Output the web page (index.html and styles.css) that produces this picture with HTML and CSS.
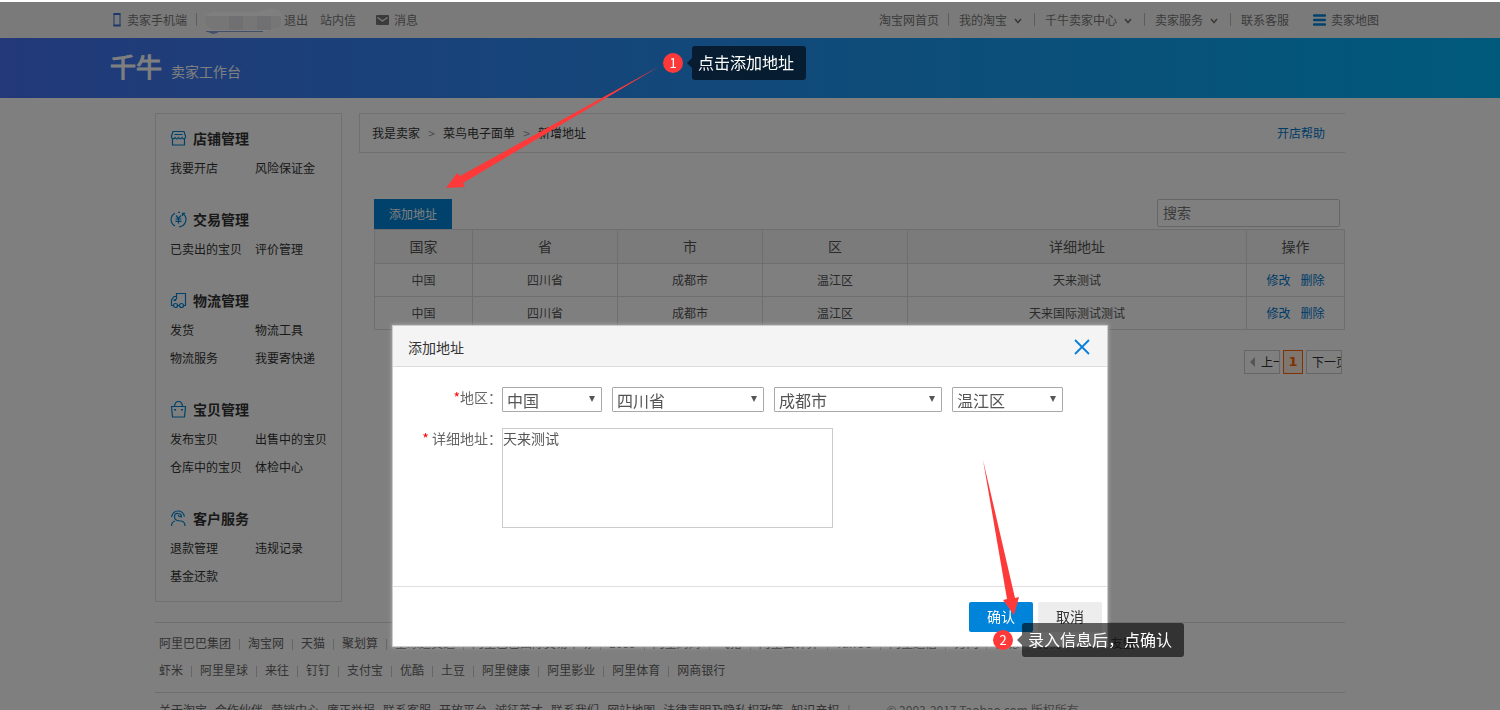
FILE: index.html
```html
<!DOCTYPE html>
<html lang="zh-CN">
<head>
<meta charset="utf-8">
<title>千牛卖家工作台</title>
<link rel="stylesheet" href="styles.css">
</head>
<body>
<div class="topbar">
  <div class="topbar-inner">
    <nav class="top-left">
      <svg class="icon-phone" viewBox="0 0 8 14"><path d="M1 1v12M7 1v12" stroke="#3b6fd0" stroke-width="1"/><path d="M0.500 1h7M0.500 12.500h7" stroke="#3b6fd0" stroke-width="2"/></svg>
      <a href="#">卖家手机端</a>
      <span class="sep"></span>
      <svg class="user-mask" viewBox="0 0 80 26"><path d="M3 8Q5 4 12 4H54Q60 3 64 1Q76-1 79 7Q81 15 76 20Q70 23 60 23H8Q0 20 3 8Z" fill="#fff"/><path d="M3 8H78Q80 15 76 20Q70 22 60 22H8Q0 18 3 8Z" fill="#ececee"/><path d="M26 8H40V22H26ZM54 8H68V22H54Z" fill="#e0e1e5"/><path d="M3 23.500H60" stroke="#879ddb"/><path d="M4 23H17Q14 26 10 26Q6 25 4 23Z" fill="#879ddb"/></svg>
      <a href="#">退出</a>
      <a href="#" class="inbox">站内信</a>
      <svg class="icon-mail" viewBox="0 0 13 10"><rect width="13" height="10" rx="1" fill="#777"/><path d="M1.500 2.500L6.500 6L11.500 2.500" fill="none" stroke="#f5f5f5" stroke-width="1.2"/></svg>
      <a href="#">消息</a>
    </nav>
    <nav class="top-right">
      <a href="#">淘宝网首页</a>
      <span class="sep"></span>
      <a href="#">我的淘宝<svg class="chev" viewBox="0 0 8 6"><path d="M1 1l3 3.500L7 1" /></svg></a>
      <span class="sep"></span>
      <a href="#">千牛卖家中心<svg class="chev" viewBox="0 0 8 6"><path d="M1 1l3 3.500L7 1" /></svg></a>
      <span class="sep"></span>
      <a href="#">卖家服务<svg class="chev" viewBox="0 0 8 6"><path d="M1 1l3 3.500L7 1" /></svg></a>
      <span class="sep"></span>
      <a href="#">联系客服</a>
      <a href="#" class="map-link"><svg class="icon-map" viewBox="0 0 13 12"><path d="M1 1.500h11M1 6h11M1 10.500h11" stroke="#0084d6" stroke-width="2.400" stroke-linecap="round"/></svg>卖家地图</a>
    </nav>
  </div>
</div>

<header class="header">
  <div class="header-inner">
    <span class="logo">千牛</span>
    <span class="logo-sub">卖家工作台</span>
  </div>
</header>

<div class="page">
  <div class="columns">
    <aside class="sidebar">
      <section class="group">
        <h3><svg viewBox="0 0 17 17"><path d="M3 1.500h11l1.500 4.500v1.500q-1.700 2.600-3.500 0q-1.700 2.600-3.500 0q-1.700 2.600-3.500 0q-1.800 2.600-3.500 0V6zM2.500 9v6h12V9M4.500 4.500h8"/></svg>店铺管理</h3>
        <div class="links"><a href="#">我要开店</a><a href="#">风险保证金</a></div>
      </section>
      <section class="group">
        <h3><svg viewBox="0 0 17 17"><path d="M5 2.200A7.200 7.200 0 0 0 5 15M8 1.300h2M12.500 2.500A7.200 7.200 0 0 1 9 15.800M12.500 5V2.300h2.600M6 4.500l2.500 3l2.500-3M8.500 7.500v5M5.500 8h6M5.500 10.300h6"/></svg>交易管理</h3>
        <div class="links"><a href="#">已卖出的宝贝</a><a href="#">评价管理</a></div>
      </section>
      <section class="group">
        <h3><svg viewBox="0 0 17 17"><path d="M3 13.500H1.500V8L4 4.500h2.500V1.500h9v12h-1.500M6.500 4.500V7L3.500 8.500h2.500M7.500 13.500h2"/><circle cx="5.500" cy="13.500" r="2"/><circle cx="11.500" cy="13.500" r="2"/></svg>物流管理</h3>
        <div class="links"><a href="#">发货</a><a href="#">物流工具</a><a href="#">物流服务</a><a href="#">我要寄快递</a></div>
      </section>
      <section class="group">
        <h3><svg viewBox="0 0 17 17"><path d="M1.500 5.500h14l-1 10.500h-12zM4.500 5.500q.5-5 4-5t4 5"/><path d="M5 8v1.500M12 8v1.500" stroke-width="2"/></svg>宝贝管理</h3>
        <div class="links"><a href="#">发布宝贝</a><a href="#">出售中的宝贝</a><a href="#">仓库中的宝贝</a><a href="#">体检中心</a></div>
      </section>
      <section class="group">
        <h3><svg viewBox="0 0 17 17"><path d="M1.500 7Q3 1 8 1t6.500 5.500M5 11Q1.500 12 1.500 16M11 11q4 .5 4 5M11 11Q4.500 11 4.500 7T8 3.500q3.500 0 3.500 3.500q-2.500 0-3.500-2"/></svg>客户服务</h3>
        <div class="links"><a href="#">退款管理</a><a href="#">违规记录</a><a href="#">基金还款</a></div>
      </section>
    </aside>

    <main class="main">
      <div class="crumbs">
        <a href="#">我是卖家</a><i>&gt;</i><a href="#">菜鸟电子面单</a><i>&gt;</i><span>新增地址</span>
        <a href="#" class="help">开店帮助</a>
      </div>
      <div class="panel">
        <div class="tools">
          <button type="button" class="add">添加地址</button>
          <input class="search" type="text" placeholder="搜索" aria-label="搜索">
        </div>
        <table class="list">
          <colgroup><col class="c-s"><col class="c-m"><col class="c-m"><col class="c-m"><col class="c-l"><col class="c-s"></colgroup>
          <thead><tr><th>国家</th><th>省</th><th>市</th><th>区</th><th>详细地址</th><th>操作</th></tr></thead>
          <tbody>
            <tr><td>中国</td><td>四川省</td><td>成都市</td><td>温江区</td><td>天来测试</td><td><a href="#">修改</a><a href="#">删除</a></td></tr>
            <tr><td>中国</td><td>四川省</td><td>成都市</td><td>温江区</td><td>天来国际测试测试</td><td><a href="#">修改</a><a href="#">删除</a></td></tr>
          </tbody>
        </table>
        <div class="pager">
          <a href="#" class="prev"><span class="tri"></span>上一页</a>
          <a href="#" class="current">1</a>
          <a href="#" class="next">下一页</a>
        </div>
      </div>
    </main>
  </div>

  <footer class="footer">
    <div class="sites">
      <div class="row"><a href="#">阿里巴巴集团</a><a href="#">淘宝网</a><a href="#">天猫</a><a href="#">聚划算</a><a href="#">全球速卖通</a><a href="#">阿里巴巴国际交易市场</a><a href="#">1688</a><a href="#">阿里妈妈</a><a href="#">飞猪</a><a href="#">阿里云计算</a><a href="#">YunOS</a><a href="#">阿里通信</a><a href="#">万网</a><a href="#">高德</a><a href="#">优视</a><a href="#">UC</a><a href="#">友盟</a></div>
      <div class="row"><a href="#">虾米</a><a href="#">阿里星球</a><a href="#">来往</a><a href="#">钉钉</a><a href="#">支付宝</a><a href="#">优酷</a><a href="#">土豆</a><a href="#">阿里健康</a><a href="#">阿里影业</a><a href="#">阿里体育</a><a href="#">网商银行</a></div>
    </div>
    <div class="about">
      <a href="#">关于淘宝</a><a href="#">合作伙伴</a><a href="#">营销中心</a><a href="#">廉正举报</a><a href="#">联系客服</a><a href="#">开放平台</a><a href="#">诚征英才</a><a href="#">联系我们</a><a href="#">网站地图</a><a href="#">法律声明及隐私权政策</a><a href="#">知识产权</a><span class="bar">|</span><span class="copy">© 2003-2017 Taobao.com 版权所有</span>
    </div>
  </footer>
</div>

<div class="overlay">
  <form class="dialog" role="dialog" aria-labelledby="dlg-title">
    <div class="dialog-head">
      <h2 id="dlg-title">添加地址</h2>
      <button type="button" class="close" aria-label="关闭"><svg viewBox="0 0 16 16"><path d="M1 1l14 14M15 1L1 15" stroke="#0a7fd9" stroke-width="1.800"/></svg></button>
    </div>
    <div class="dialog-body">
      <div class="field">
        <label for="country"><b>*</b>地区：</label>
        <div class="selects">
          <span class="sel s1"><select id="country"><option>中国</option></select></span>
          <span class="sel s2"><select aria-label="省"><option>四川省</option></select></span>
          <span class="sel s3"><select aria-label="市"><option>成都市</option></select></span>
          <span class="sel s4"><select aria-label="区"><option>温江区</option></select></span>
        </div>
      </div>
      <div class="field">
        <label for="detail"><b>*</b> 详细地址：</label>
        <textarea id="detail">天来测试</textarea>
      </div>
    </div>
    <div class="dialog-foot">
      <button type="button" class="ok">确认</button>
      <button type="button" class="cancel">取消</button>
    </div>
  </form>
</div>

<div class="notes">
  <svg class="arrows" viewBox="0 0 1500 710" width="1500" height="710">
    <path d="M660 66L460 176L457 173L446 188L465 187L463 183Z" fill="#fd3a39"/>
    <path d="M983 460L1007 599L1003 600L1014 615L1019 597L1015 598Z" fill="#fd3a39"/>
  </svg>
  <div class="note note-1"><span class="num">1</span><span class="tip">点击添加地址</span></div>
  <div class="note note-2"><span class="num">2</span><span class="tip">录入信息后，点确认</span></div>
</div>
</body>
</html>
```
FILE: styles.css
```css
* { box-sizing: border-box; }
html, body { height: 100%; overflow: hidden; }
body {
  margin: 0;
  padding-top: 2px;
  background: #fff;
  color: #333;
  font: 12px/20px "Noto Sans CJK SC", sans-serif;
}
a { color: inherit; text-decoration: none; }
button, input, select, textarea { font-family: inherit; margin: 0; }
svg { display: block; flex: none; }

/* top navigation */
.topbar { background: #f5f5f5; color: #777; }
.topbar-inner {
  max-width: 1280px; height: 36px; margin: 0 auto; padding: 0 11px 0 3px;
  display: flex; align-items: center; justify-content: space-between;
}
.top-left, .top-right { display: flex; align-items: center; line-height: 18px; padding-bottom: 1px; }
.top-right a { display: flex; align-items: center; }
.sep { width: 1px; height: 13px; margin: 0 10px 0 9px; background: #bbb; }
.icon-phone { width: 8px; height: 14px; margin-right: 6px; }
.top-left .sep { margin-right: 6px; }
.user-mask { width: 80px; height: 26px; margin: 3px 1px 0 0; }
.inbox { margin: 0 20px 0 12px; }
.icon-mail { width: 13px; height: 10px; margin-right: 5px; }
.chev { width: 8px; height: 6px; margin: 2px 3px 0 7px; fill: none; stroke: #777; stroke-width: 1.6; }
.map-link { margin-left: 24px; }
.icon-map { width: 13px; height: 12px; margin-right: 5px; }

/* brand header */
.header { background: linear-gradient(90deg, #4672f2, #00b4f6); color: #fff; }
.header-inner {
  max-width: 1280px; height: 60px; margin: 0 auto;
  display: flex; align-items: flex-end; gap: 9px;
}
.logo { font-size: 26px; line-height: 32px; padding-bottom: 16px; -webkit-text-stroke: 1px #fff; }
.logo-sub { font-size: 14px; line-height: 20px; padding-bottom: 17px; }

.page { max-width: 1190px; margin: 0 auto; padding-top: 15px; }
.columns { display: flex; align-items: flex-start; gap: 17px; }

/* side menu */
.sidebar { width: 187px; flex: none; border: 1px solid #e0e0e0; padding: 9px 0 11px 14px; }
.group + .group { margin-top: 22px; }
.group h3 { display: flex; align-items: center; gap: 6px; margin: 0; font-size: 14px; line-height: 31px; }
.group h3 svg { width: 17px; height: 17px; fill: none; stroke: #0084d6; stroke-width: 1.2; }
.links { display: grid; grid-template-columns: 85px 1fr; line-height: 28px; white-space: nowrap; }

/* main column */
.main { flex: 1; min-width: 0; }
.crumbs {
  display: flex; align-items: center; height: 40px; padding: 0 20px 0 12px;
  border: 1px solid #e0e0e0; border-right: 0;
}
.crumbs i { width: 23px; text-align: center; font-style: normal; color: #999; }
.help { margin-left: auto; }
.help, .list a { color: #0078cf; }
.panel { padding: 46px 0 0 15px; }
.tools { display: flex; justify-content: space-between; align-items: flex-start; padding-right: 5px; }
.add { width: 78px; height: 30px; padding: 0 0 1px; border: 0; background: #0084d7; color: #fff; font-size: 12px; }
.search { width: 183px; height: 28px; padding: 0 5px 2px; border: 1px solid #ccc; border-radius: 2px; font-size: 14px; background: #fff; }
.search::placeholder { color: #777; opacity: 1; }
.list { width: 100%; border-collapse: collapse; table-layout: fixed; text-align: center; color: #555; }
.list th, .list td { border: 1px solid #ddd; padding: 0; height: 33px; }
.list th { height: 34px; padding-bottom: 2px; font-size: 14px; font-weight: 400; background: #f7f7f7; }
.list a + a { margin-left: 10px; }
.c-s { width: 98px; }
.c-m { width: 145px; }
.pager { display: flex; justify-content: flex-end; gap: 3px; margin: 20px 3px 0 0; }
.pager a { width: 36px; height: 24px; border: 1px solid #ccc; padding-left: 5px; line-height: 28px; display: flex; align-items: center; overflow: hidden; white-space: nowrap; }
.tri { flex: none; margin-right: 6px; border: 5px solid transparent; border-left: 0; border-right-color: #aaa; }
.pager .current { width: 20px; padding: 0; justify-content: center; border-color: #f60; background: #ffede1; color: #f60; font-weight: 700; font-size: 13px; font-family: "DejaVu Sans", sans-serif; }

/* footer */
.footer { margin-top: 20px; white-space: nowrap; color: #666; }
.sites { border: 1px solid #ddd; border-width: 1px 0; padding: 6px 4px 9px; }
.row { display: flex; line-height: 27px; }
.row a { display: flex; align-items: center; }
.row a + a::before { content: ""; width: 1px; height: 11px; margin: 4px 8px 0; background: #ccc; }
.about { display: flex; gap: 8px; padding: 7px 4px; }
.copy { margin-left: 28px; color: #888; }
.bar { color: #bbb; }

/* dialog */
.overlay { position: fixed; inset: 2px 0 0; display: flex; align-items: flex-start; justify-content: center; background: rgba(0, 0, 0, .5); }
.dialog { width: 716px; margin-top: 323px; background: #fff; border: 1px solid #ccc; box-shadow: 0 0 4px rgba(255, 255, 255, .4); }
.dialog-head { display: flex; align-items: center; justify-content: space-between; height: 41px; padding: 1px 17px 0 15px; background: #f4f4f4; border-bottom: 1px solid #ddd; }
.dialog-head h2 { margin: 0; font-size: 14px; font-weight: 400; }
.close { width: 16px; height: 16px; padding: 0; border: 0; background: none; }
.dialog-body { padding: 20px 44px 58px 0; display: grid; gap: 16px; }
.field { display: flex; }
.field label { width: 109px; flex: none; text-align: right; font-size: 14px; line-height: 20px; color: #666; }
.field b { color: #f00; font-weight: 400; }
.selects { display: flex; gap: 10px; }
.sel { position: relative; }
.sel::after { content: ""; position: absolute; right: 7px; top: 9px; border: 3px solid transparent; border-top: 6px solid #555; border-bottom: 0; pointer-events: none; }
.sel select { appearance: none; display: block; width: 100%; height: 25px; padding: 0 4px; border: 1px solid #a9a9a9; border-radius: 1px; background: #fff; color: #555; font-size: 16px; line-height: 22px; }
.s1 { width: 100px; }
.s2 { width: 152px; }
.s3 { width: 168px; }
.s4 { width: 111px; }
textarea { display: block; width: 331px; height: 100px; padding: 0; border: 1px solid #ccc; resize: none; color: #555; font-size: 14px; line-height: 18px; }
.dialog-foot { display: flex; justify-content: flex-end; gap: 5px; padding: 15px 5px 14px; border-top: 1px solid #e0e0e0; }
.dialog-foot button { width: 64px; height: 30px; padding: 0 0 2px; border: 0; border-radius: 2px; font-size: 14px; }
.ok { background: #0084d9; color: #fff; }
.cancel { background: #ededed; color: #333; }

/* step callouts */
.notes { position: absolute; inset: 0; overflow: hidden; pointer-events: none; }
.arrows { position: absolute; left: 0; top: 0; }
.note { position: absolute; display: flex; align-items: center; gap: 9px; color: #fff; white-space: nowrap; }
.note-1 { left: 663px; top: 46px; }
.note-2 { left: 993px; top: 623px; }
.num { width: 20px; height: 20px; border-radius: 50%; background: #fd3a39; text-align: center; font-size: 13px; line-height: 19px; }
.tip { position: relative; padding: 0 12px 2px 6px; border-radius: 3px; background: rgba(0, 0, 0, .6); font-size: 16px; line-height: 32px; }
.tip::before { content: ""; position: absolute; left: -5px; top: 12px; border: 5px solid transparent; border-left: 0; border-right-color: rgba(0, 0, 0, .6); }
```
